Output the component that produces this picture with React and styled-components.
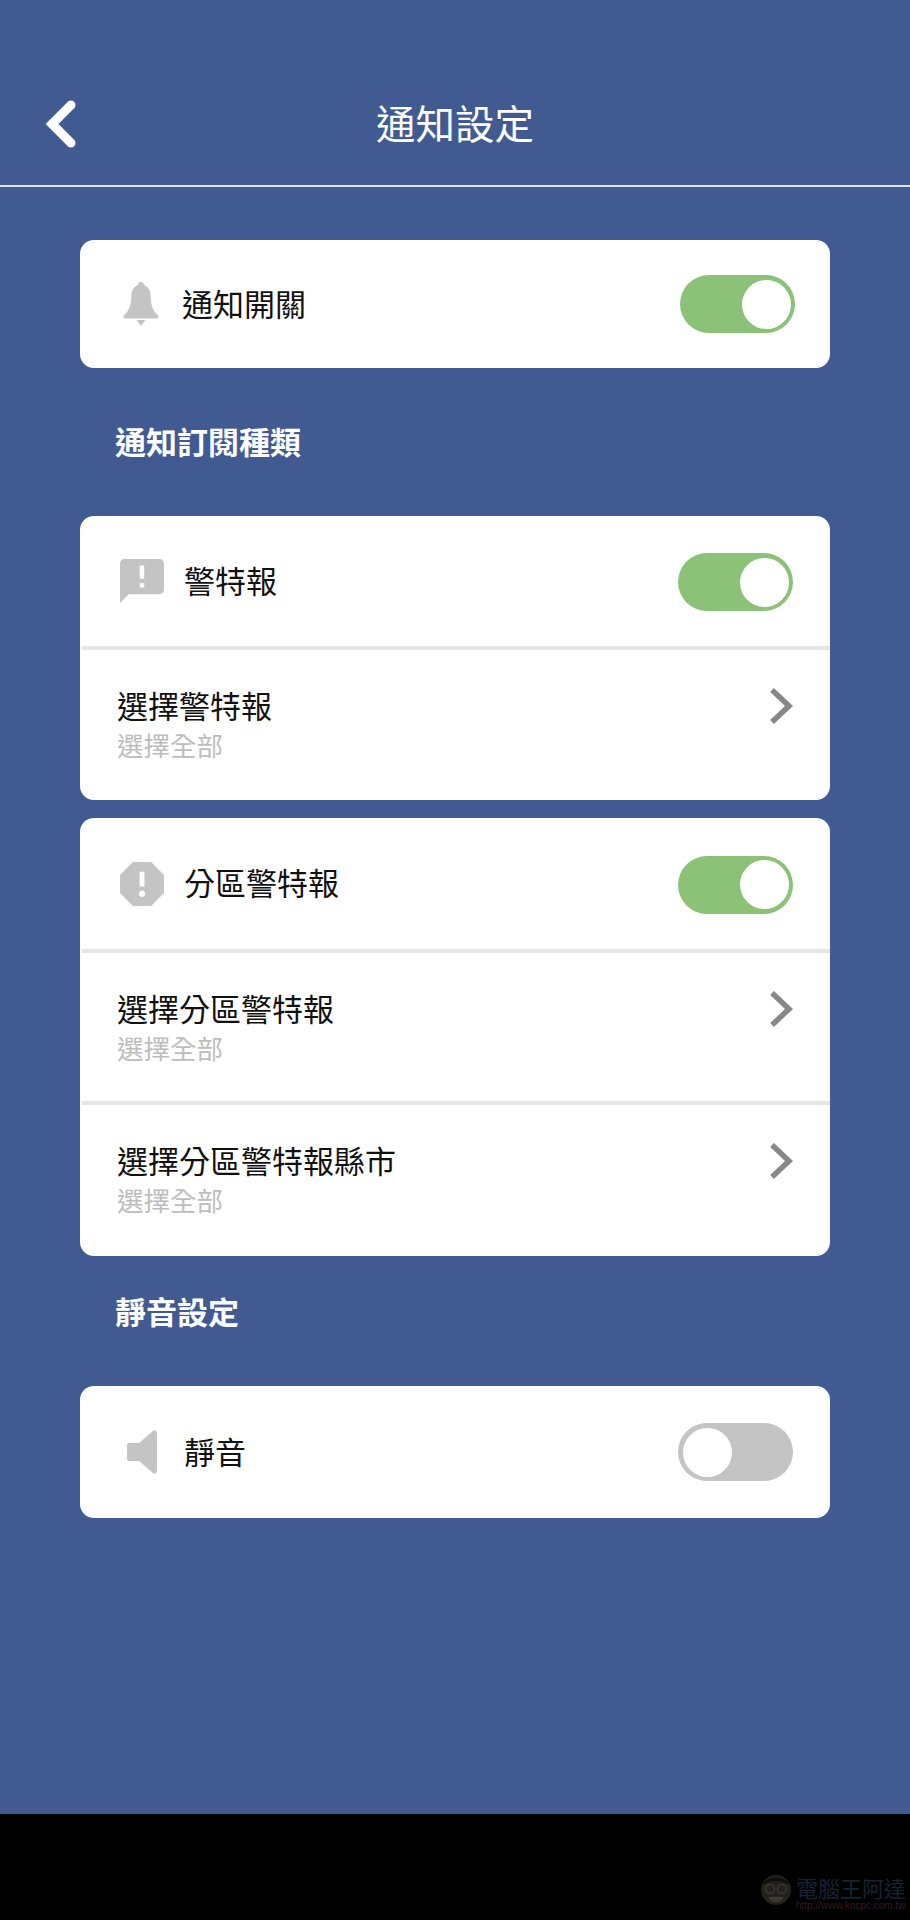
import React from 'react';
import styled, { createGlobalStyle } from 'styled-components';

const GlobalStyle = createGlobalStyle`
    html, body { margin: 0; padding: 0; background: #000; }
    * { box-sizing: border-box; }
    body {
        font-family: "Noto Sans CJK TC", "Noto Sans", sans-serif;
    }
`;

function Toggle({ on, drop }) {
    return (
        <Track $on={on} $drop={drop}>
            <Knob />
        </Track>
    );
}

function SwitchRow({ icon, label, height, wide, drop = 0, on = true }) {
    return (
        <Row $height={height} $wide={wide}>
            <IconSlot $wide={wide}>{icon}</IconSlot>
            <RowLabel>{label}</RowLabel>
            <Toggle on={on} drop={drop} />
        </Row>
    );
}

function LinkRow({ label, height }) {
    return (
        <LinkBody $height={height}>
            <LinkText>
                <LinkTitle>{label}</LinkTitle>
                <LinkSub>選擇全部</LinkSub>
            </LinkText>
            <Chevron viewBox="0 0 24 38" fill="none">
                <path d="M3 3l17 16L3 35" stroke="#888" strokeWidth="5.5" />
            </Chevron>
        </LinkBody>
    );
}

const BellIcon = () => (
    <Glyph $w={36} $h={44} viewBox="0 0 36 44">
        <path d="M18 0c1.700 0 2.800 1.200 2.900 3 4.600 1.500 6.600 6 6.800 11.500.3 7.500 1.200 13.500 7 18.500 1.200 1 1 3.500-1 3.500H2.300c-2 0-2.200-2.500-1-3.500 5.800-5 6.700-11 7-18.500C8.500 9 10.500 4.500 15.100 3c.1-1.800 1.200-3 2.900-3z" />
        <path d="M13.500 38h9L18 44z" />
    </Glyph>
);

const AlertBubbleIcon = () => (
    <Glyph $w={44} $h={44} viewBox="2 2 20 20">
        <path d="M20 2H4c-1.100 0-1.990.9-1.990 2L2 22l4-4h14c1.100 0 2-.9 2-2V4c0-1.100-.9-2-2-2zm-7 9h-2V5h2v6zm0 4h-2v-2h2v2z" />
    </Glyph>
);

const OctagonIcon = () => (
    <Glyph $w={44} $h={44} viewBox="3 3 18 18">
        <path d="M15.730 3H8.270L3 8.270v7.460L8.270 21h7.460L21 15.730V8.270L15.730 3zM12 17.300c-.72 0-1.300-.58-1.300-1.300 0-.72.58-1.300 1.300-1.300.72 0 1.300.58 1.300 1.300 0 .72-.58 1.300-1.300 1.300zm1-4.300h-2V7h2v6z" />
    </Glyph>
);

const SpeakerIcon = () => (
    <Glyph $w={30} $h={44} viewBox="0 0 30 44">
        <path d="M2 13h10L26 1c1.600-1.400 4-.6 4 2v38c0 2.600-2.400 3.400-4 2L12 31H2c-1.200 0-2-.8-2-2V15c0-1.200.8-2 2-2z" />
    </Glyph>
);

export default function App() {
    return (
        <Page>
            <GlobalStyle />
            <Screen>
                <Header>
                    <BackArrow viewBox="0 0 32 48" fill="none">
                        <path d="M26 5L7 24l19 19" stroke="#fff" strokeWidth="9" strokeLinecap="round" strokeLinejoin="miter" />
                    </BackArrow>
                    <Title>通知設定</Title>
                </Header>

                <Content>
                    <Card $top={53}>
                        <SwitchRow wide height={128} icon={<BellIcon />} label="通知開關" />
                    </Card>

                    <SectionTitle $top={51} $bottom={53}>通知訂閱種類</SectionTitle>

                    <Card>
                        <SwitchRow height={130} drop={2} icon={<AlertBubbleIcon />} label="警特報" />
                        <Divider />
                        <LinkRow height={150} label="選擇警特報" />
                    </Card>

                    <Card $top={18}>
                        <SwitchRow height={131} drop={2} icon={<OctagonIcon />} label="分區警特報" />
                        <Divider />
                        <LinkRow height={148} label="選擇分區警特報" />
                        <Divider />
                        <LinkRow height={151} label="選擇分區警特報縣市" />
                    </Card>

                    <SectionTitle $top={33} $bottom={53}>靜音設定</SectionTitle>

                    <Card>
                        <SwitchRow height={132} icon={<SpeakerIcon />} label="靜音" on={false} />
                    </Card>
                </Content>
            </Screen>

            <BottomBar>
                <Watermark>
                    <Mascot viewBox="0 0 36 40">
                        <circle cx="18" cy="18" r="15" fill="#24211d" />
                        <path d="M5 13C7 3 29 3 31 13 25 8 11 8 5 13z" fill="#100f0d" />
                        <circle cx="12" cy="17" r="4.500" fill="none" stroke="#3b3732" strokeWidth="1.500" />
                        <circle cx="24" cy="17" r="4.500" fill="none" stroke="#3b3732" strokeWidth="1.500" />
                        <path d="M10 25c4 7 12 7 16 0z" fill="#3e3830" />
                    </Mascot>
                    <MarkText>
                        <MarkName>電腦王阿達</MarkName>
                        <MarkUrl>http://www.kocpc.com.tw</MarkUrl>
                    </MarkText>
                </Watermark>
            </BottomBar>
        </Page>
    );
}

const Page = styled.div`
    display: flex;
    flex-direction: column;
    width: 910px;
    height: 1920px;
    overflow: hidden;
`;

const Screen = styled.div`
    height: 1814px;
    background-color: #415b92;
`;

const Header = styled.header`
    position: relative;
    display: flex;
    align-items: center;
    justify-content: center;
    height: 187px;
    padding-top: 60px;
    padding-bottom: 1px;
    border-bottom: 2px solid #dfe3ec;
`;

const BackArrow = styled.svg`
    position: absolute;
    left: 45px;
    top: 100px;
    width: 32px;
    height: 48px;
`;

const Title = styled.h1`
    margin: 0;
    color: #fff;
    font-size: 39.5px;
    font-weight: 400;
    line-height: 50px;
`;

const Content = styled.main`
    display: flex;
    flex-direction: column;
    padding: 0 80px;
`;

const Card = styled.section`
    margin-top: ${(p) => p.$top || 0}px;
    background-color: #fff;
    border-radius: 14px;
    overflow: hidden;
`;

const SectionTitle = styled.h2`
    margin: ${(p) => p.$top}px 0 ${(p) => p.$bottom}px 35px;
    color: #fff;
    font-size: 31px;
    font-weight: 700;
    line-height: 44px;
`;

const Row = styled.div`
    display: flex;
    align-items: center;
    height: ${(p) => p.$height}px;
    padding: 0 ${(p) => (p.$wide ? 35 : 37)}px 0 ${(p) => (p.$wide ? 43 : 40)}px;
`;

const IconSlot = styled.div`
    display: flex;
    justify-content: center;
    flex: none;
    width: ${(p) => (p.$wide ? 36 : 44)}px;
    margin-right: ${(p) => (p.$wide ? 23 : 20)}px;
`;

const Glyph = styled.svg`
    display: block;
    width: ${(p) => p.$w}px;
    height: ${(p) => p.$h}px;
    fill: #c4c4c4;
`;

const RowLabel = styled.span`
    flex: 1;
    margin-top: -3px;
    color: #111;
    font-size: 31px;
    line-height: 44px;
`;

const Track = styled.div`
    display: flex;
    justify-content: ${(p) => (p.$on ? 'flex-end' : 'flex-start')};
    align-items: center;
    flex: none;
    width: 115px;
    height: 58px;
    margin-top: ${(p) => p.$drop}px;
    padding: 0 4px 0 5px;
    border-radius: 29px;
    background-color: ${(p) => (p.$on ? '#8cc178' : '#c4c4c4')};
`;

const Knob = styled.div`
    width: 49px;
    height: 49px;
    border-radius: 50%;
    background-color: #fff;
`;

const Divider = styled.hr`
    margin: 0 0 0 2px;
    height: 4px;
    border: 0;
    background-color: #e6e6e6;
`;

const LinkBody = styled.div`
    display: flex;
    align-items: flex-start;
    justify-content: space-between;
    height: ${(p) => p.$height}px;
    padding: 33px 37px 0 37px;
`;

const LinkText = styled.div`
    display: flex;
    flex-direction: column;
`;

const LinkTitle = styled.span`
    color: #111;
    font-size: 31px;
    line-height: 44px;
`;

const LinkSub = styled.span`
    margin-top: 1px;
    color: #bdbdbd;
    font-size: 26.5px;
    line-height: 34px;
`;

const Chevron = styled.svg`
    flex: none;
    width: 24px;
    height: 38px;
    margin-top: 4px;
`;

const BottomBar = styled.footer`
    position: relative;
    flex: 1;
    background-color: #000;
`;

const Watermark = styled.div`
    position: absolute;
    right: 2px;
    bottom: 8px;
    display: flex;
    align-items: center;
    gap: 2px;
`;

const Mascot = styled.svg`
    flex: none;
    width: 36px;
    height: 40px;
`;

const MarkText = styled.div`
    display: flex;
    flex-direction: column;
    width: 112px;
`;

const MarkName = styled.span`
    color: #182232;
    font-size: 22px;
    line-height: 26px;
    white-space: nowrap;
`;

const MarkUrl = styled.span`
    color: #301a20;
    font-family: "Liberation Sans", sans-serif;
    font-size: 10px;
    line-height: 11px;
    white-space: nowrap;
`;
